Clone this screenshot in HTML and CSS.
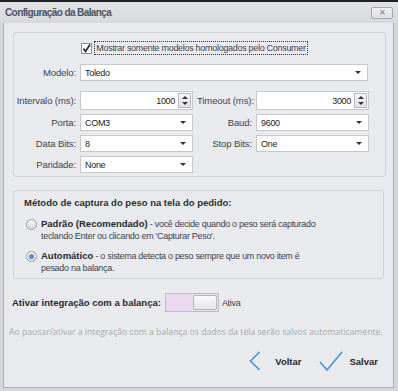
FILE: index.html
```html
<!DOCTYPE html>
<html lang="pt-BR">
<head>
  <meta charset="UTF-8">
  <title>Configuração da Balança</title>
  <link rel="stylesheet" href="styles.css">
</head>
<body>

  <div class="window">
    <div class="topbar"></div>
    <div class="titlebar">
      <span class="title">Configuração da Balança</span>
      <button class="close-btn">&#x2715;</button>
    </div>

    <div class="content">
      <div class="group group-port">
        <div class="check-row">
          <span class="checkbox">
            <svg width="11" height="11" viewBox="0 0 11 11">
              <rect x="0.5" y="0.5" width="10" height="10" fill="#fff" stroke="#8c9098"/>
              <path d="M2.5 5.5 L4.5 8.5 L9 1.5" fill="none" stroke="#222" stroke-width="1.6"/>
            </svg>
          </span>
          <span class="check-label">Mostrar somente modelos homologados pelo Consumer</span>
        </div>

        <div class="model-row">
          <label class="field-label">Modelo:</label>
          <div class="select wide"><span>Toledo</span><i class="arrow"></i></div>
        </div>

        <div class="form-grid">
          <label class="field-label">Intervalo (ms):</label>
          <div class="spin">
            <span class="spin-value">1000</span>
            <span class="spin-btns"><i class="up"></i><i class="down"></i></span>
          </div>
          <label class="field-label">Timeout (ms):</label>
          <div class="spin">
            <span class="spin-value">3000</span>
            <span class="spin-btns"><i class="up"></i><i class="down"></i></span>
          </div>

          <label class="field-label">Porta:</label>
          <div class="select"><span>COM3</span><i class="arrow"></i></div>
          <label class="field-label">Baud:</label>
          <div class="select"><span>9600</span><i class="arrow"></i></div>

          <label class="field-label">Data Bits:</label>
          <div class="select"><span>8</span><i class="arrow"></i></div>
          <label class="field-label">Stop Bits:</label>
          <div class="select"><span>One</span><i class="arrow"></i></div>

          <label class="field-label">Paridade:</label>
          <div class="select"><span>None</span><i class="arrow"></i></div>
        </div>
      </div>

      <div class="group group-method">
        <div class="group-title">Método de captura do peso na tela do pedido:</div>

        <div class="radio-row">
          <span class="radio"></span>
          <p><b>Padrão (Recomendado)</b> - você decide quando o peso será capturado<br>teclando Enter ou clicando em 'Capturar Peso'.</p>
        </div>

        <div class="radio-row">
          <span class="radio checked"></span>
          <p><b>Automático</b> - o sistema detecta o peso sempre que um novo item é<br>pesado na balança.</p>
        </div>
      </div>

      <div class="toggle-row">
        <span class="toggle-label">Ativar integração com a balança:</span>
        <span class="toggle"><span class="toggle-knob"></span></span>
        <span class="toggle-state">Ativa</span>
      </div>

      <div class="hint">Ao pausar/ativar a integração com a balança os dados da tela serão salvos automaticamente.</div>

      <div class="actions">
        <button class="action action-back">
          <svg width="12" height="20" viewBox="0 0 12 20">
            <path d="M10.5 1 L1.5 10 L10.5 19" fill="none" stroke="#3d8fe6" stroke-width="1.5"/>
          </svg>
          <span>Voltar</span>
        </button>
        <button class="action action-save">
          <svg width="24" height="20" viewBox="0 0 24 20">
            <path d="M1 11 L8 19 L23 1" fill="none" stroke="#3d8fe6" stroke-width="1.5"/>
          </svg>
          <span>Salvar</span>
        </button>
      </div>
    </div>
  </div>

</body>
</html>
```

FILE: styles.css
```css
body {
  margin: 0;
  font-family: 'Liberation Sans', Arial, sans-serif;
  font-size: 9px;
  letter-spacing: -0.3px;
  color: #1c1c1c;
}

b {
  font-size: 9.5px;
  letter-spacing: 0;
}

.window {
  width: 398px;
  height: 391px;
  background: #d4d6db;
  display: flex;
  flex-direction: column;
}

.topbar {
  height: 2px;
  background: #202122;
}

.titlebar {
  height: 21px;
  display: flex;
  align-items: center;
  justify-content: space-between;
  padding: 0 5px;
  background: linear-gradient(to bottom, #e2e3e7, #d6d8dd);
}

.title {
  font-weight: bold;
  font-size: 10px;
  letter-spacing: -0.6px;
  color: #4b5262;
}

.close-btn {
  width: 22px;
  height: 12px;
  margin-right: 0;
  padding: 0;
  border: 1px solid #a4a7ae;
  border-radius: 2px;
  background: linear-gradient(to bottom, #eff0f2, #dcdee2);
  color: #7c8089;
  font-size: 8px;
  line-height: 10px;
}

.content {
  flex: 1;
  margin: 0 4px 3px 3px;
  padding: 9px 7px 0 9px;
  border: 1px solid #a9adb5;
  border-top: none;
  background: #e9eaee;
}

.group {
  width: 371px;
  border: 1px solid #d0d2d7;
  border-radius: 3px;
}

.group-port {
  height: 143px;
}

.check-row {
  display: flex;
  align-items: center;
  justify-content: center;
  gap: 2px;
  height: 16px;
  margin-top: 7px;
  margin-left: -10px;
}

.checkbox {
  display: flex;
}

.check-label {
  padding: 1px 1px;
  border: 1px dotted #333;
  color: #3d4250;
}

.field-label {
  text-align: right;
  white-space: nowrap;
  font-size: 9.5px;
  letter-spacing: -0.1px;
  color: #3d4250;
  align-self: center;
}

.model-row {
  display: grid;
  grid-template-columns: 62px 288px;
  column-gap: 4px;
  height: 17px;
  margin-top: 8px;
}

.form-grid {
  display: grid;
  grid-template-columns: 62px 113px 55px 113px;
  grid-template-rows: 19px 17px 17px 17px;
  column-gap: 4px;
  row-gap: 4px;
  margin-top: 10px;
}

.select {
  display: flex;
  align-items: center;
  justify-content: space-between;
  padding: 0 6px 0 4px;
  border: 1px solid #c6c8cc;
  background: #fff;
}

.arrow {
  width: 0;
  height: 0;
  border-left: 3px solid transparent;
  border-right: 3px solid transparent;
  border-top: 3px solid #333;
}

.spin {
  display: flex;
  border: 1px solid #c6c8cc;
  background: #fff;
}

.spin-value {
  flex: 1;
  display: flex;
  align-items: center;
  justify-content: flex-end;
  padding-right: 2px;
}

.spin-btns {
  width: 11px;
  margin: 1px;
  display: flex;
  flex-direction: column;
  align-items: center;
  justify-content: space-around;
  border: 1px solid #b7b9be;
  background: linear-gradient(to bottom, #f6f6f7, #e2e3e6);
}

.spin-btns .up {
  border-left: 3px solid transparent;
  border-right: 3px solid transparent;
  border-bottom: 3px solid #333;
}

.spin-btns .down {
  border-left: 3px solid transparent;
  border-right: 3px solid transparent;
  border-top: 3px solid #333;
}

.group-method {
  height: 89px;
  margin-top: 13px;
  padding-left: 10px;
  box-sizing: border-box;
}

.group-title {
  font-weight: bold;
  font-size: 9.5px;
  letter-spacing: 0;
  color: #2c2f36;
  margin-top: 6px;
}

.radio-row {
  display: flex;
  gap: 4px;
  margin-top: 10px;
  color: #3d4250;
}

.radio-row + .radio-row {
  margin-top: 8px;
}

.radio-row p {
  margin: 0;
  line-height: 12px;
}

.radio-row b {
  color: #26282e;
}

.radio {
  width: 9px;
  height: 9px;
  margin: 1px 0 0 2px;
  border: 1px solid #9a9ea6;
  border-radius: 50%;
  background: linear-gradient(to bottom, #f4f4f5, #d9dade);
  position: relative;
}

.radio.checked::after {
  content: "";
  position: absolute;
  left: 2px;
  top: 2px;
  width: 5px;
  height: 5px;
  border-radius: 50%;
  background: #5a8fd6;
}

.toggle-row {
  display: flex;
  align-items: center;
  gap: 3px;
  margin-top: 14px;
  margin-left: -1px;
}

.toggle-label {
  font-weight: bold;
  font-size: 9.5px;
  letter-spacing: 0;
  color: #26282e;
  margin-right: 1px;
}

.toggle {
  width: 50px;
  height: 15px;
  border: 1px solid #c2bcc8;
  background: #ead9ef;
  display: flex;
  justify-content: flex-end;
  padding: 1px;
}

.toggle-knob {
  width: 22px;
  border: 1px solid #b6b8bd;
  border-radius: 2px;
  background: linear-gradient(to bottom, #fbfbfb, #e4e5e8);
}

.toggle-state {
  color: #3d4250;
}

.hint {
  margin-top: 14px;
  margin-left: -4px;
  font-family: 'Open Sans', sans-serif;
  font-size: 8.65px;
  letter-spacing: 0;
  color: #a7a9b1;
  white-space: nowrap;
}

.actions {
  display: flex;
  justify-content: flex-end;
  gap: 18px;
  margin-top: 13px;
  margin-right: 8px;
}

.action {
  display: flex;
  align-items: center;
  padding: 0;
  border: none;
  background: none;
  font-family: 'Liberation Sans', Arial, sans-serif;
  font-size: 9.5px;
  letter-spacing: 0;
  font-weight: bold;
  color: #26282e;
}

.action-back {
  gap: 14px;
}

.action-save {
  gap: 6px;
}
```
